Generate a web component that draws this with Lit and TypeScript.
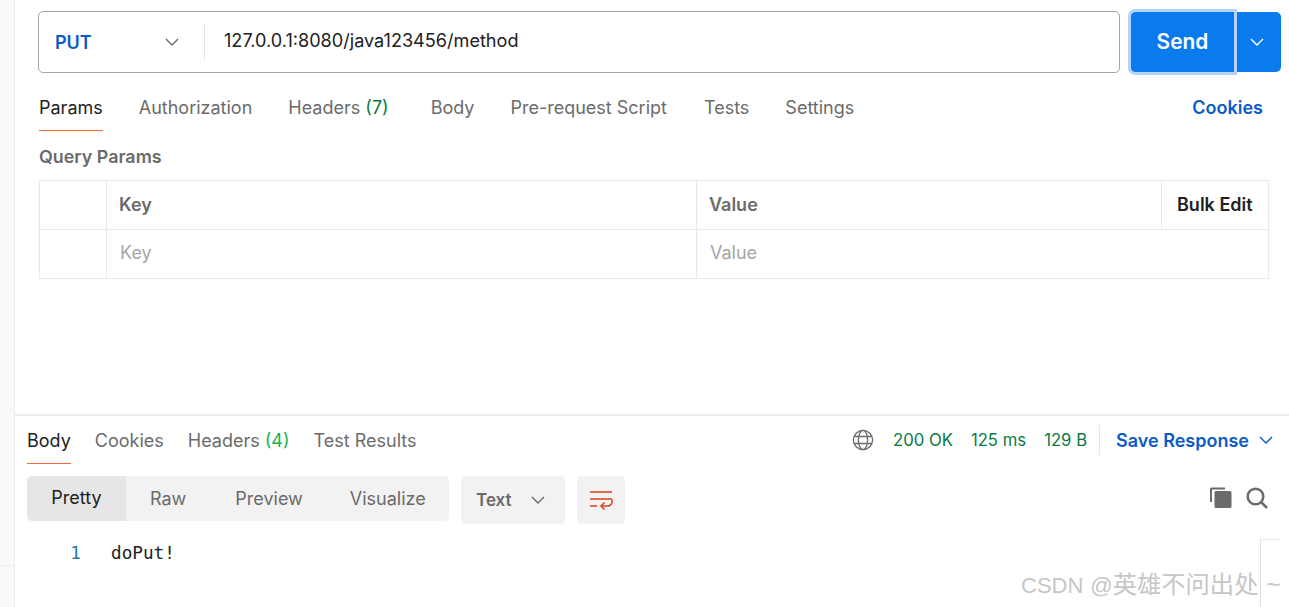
import { LitElement, html, css } from "lit";
import { customElement } from "lit/decorators.js";

const chev = () => html`<svg viewBox="0 0 14 8" width="14" height="8" fill="none" stroke="currentColor" stroke-width="1.4"><path d="M1 1l6 6 6-6"/></svg>`;

@customElement("app-root")
export class AppRoot extends LitElement {
  static styles = css`
    :host { display: flex; width: 1289px; height: 607px; overflow: hidden; background: #fff; position: relative; font-family: Inter, "Liberation Sans", sans-serif; font-size: 18px; color: #212121; }
    .rail { width: 14px; flex: none; background: #f9f9f9; border-right: 1px solid #ededed; display: flex; flex-direction: column; }
    .rail i { display: block; height: 1px; background: #ededed; margin-top: 565px; }
    .main { flex: 1; display: flex; flex-direction: column; min-width: 0; }
    .req { flex: none; height: 416px; padding: 11px 8px 0 23px; box-sizing: border-box; border-bottom: 2px solid #ededed; }
    .bar { display: flex; height: 62px; }
    .url { flex: none; width: 1082px; box-sizing: border-box; border: 1px solid #a6a6a6; border-radius: 5px; display: flex; align-items: center; }
    .method { width: 166px; box-sizing: border-box; padding: 0 25px 0 16px; display: flex; align-items: center; justify-content: space-between; color: #0b5bc4; font-weight: 600; font-size: 18px; height: 36px; border-right: 1px solid #e6e6e6; }
    .method svg { color: #6b6b6b; }
    .addr { padding-left: 19px; font-size: 18.1px; position: relative; top: -2px; }
    .send { margin-left: 11px; width: 103px; height: 60px; margin-top: 1px; padding-bottom: 2px; box-sizing: border-box; background: #097bed; color: #fff; font-weight: 600; font-size: 20.9px; display: flex; align-items: center; justify-content: center; border-radius: 4px 0 0 4px; outline: 3px solid #b5d4f8; }
    .more { margin-left: 3px; width: 44px; height: 60px; margin-top: 1px; padding-right: 4px; box-sizing: border-box; background: #097bed; color: #fff; border-radius: 0 5px 5px 0; display: flex; align-items: center; justify-content: center; }
    .tabs { display: flex; align-items: flex-start; gap: 36px; }
    .rtabs { margin-top: 24px; height: 36px; padding-left: 1px; }
    .tab { color: #6b6b6b; white-space: nowrap; line-height: 22px; }
    .tab.on { color: #212121; position: relative; }
    .tab.on::after { content: ""; position: absolute; left: 0; right: 0; top: 33px; height: 1px; background: #f26b3a; }
    .body-tab { margin-left: 6px; }
    .tests-tab { margin-left: 1px; }
    .n7 { color: #0a7a43; }
    .n4 { color: #18b254; }
    .spacer { flex: 1; }
    .cookies { color: #0b5bc4; font-weight: 600; padding-right: 18px; }
    .qp { font-weight: 600; color: #6b6b6b; font-size: 17.9px; margin-top: 13px; line-height: 22px; padding-left: 1px; }
    .grid { margin-top: 12px; margin-left: 1px; width: 1230px; box-sizing: border-box; border: 1px solid #e9e9e9; border-width: 1px 1px 0 1px; display: grid; grid-template-columns: 67px 590px 465px 1fr; font-size: 18px; }
    .grid > div { height: 49px; box-sizing: border-box; border-bottom: 1px solid #e9e9e9; border-right: 1px solid #e9e9e9; display: flex; align-items: center; padding-left: 12px; }
    .grid > div.last { border-right: 0; }
    .grid .h { font-weight: 600; color: #6b6b6b; padding-bottom: 1px; }
    .grid .bulk { color: #212121; font-weight: 600; padding: 0 0 1px 15px; }
    .grid .ph { color: #a6a6a6; padding: 0 0 3px 13px; }
    .grid .cell2 { grid-column: span 2; }
    .resp { flex: 1; padding: 0 0 0 12px; position: relative; }
    .rtop { display: flex; height: 50px; align-items: flex-start; }
    .rtop .tabs { gap: 24px; margin-top: 14px; }
    .meta { margin-left: auto; display: flex; align-items: center; color: #0a7a43; font-size: 16.7px; margin-top: 9px; height: 30px; padding-right: 16px; }
    .meta .globe { margin-right: 19px; color: #6b6b6b; }
    .meta .s { margin-right: 18px; white-space: nowrap; }
    .meta .sep { width: 1px; height: 30px; background: #e6e6e6; margin: 0 16px 0 -6px; }
    .meta .save { color: #0b5bc4; font-weight: 600; font-size: 18px; margin-right: 10px; white-space: nowrap; }
    .meta svg:last-child { color: #0b5bc4; }
    .tools { display: flex; align-items: flex-start; margin-top: 10px; height: 48px; }
    .seg { display: flex; flex: none; width: 422px; height: 45px; background: #f2f2f2; border-radius: 5px; overflow: hidden; color: #6b6b6b; align-items: center; }
    .seg span { line-height: 43px; flex: none; }
    .seg .on { width: 99px; background: #e6e6e6; color: #212121; text-align: center; margin-right: 24px; line-height: 45px; padding-bottom: 1px; height: 45px; box-sizing: border-box; line-height: 43px; }
    .seg .g { margin-right: 49px; }
    .seg .g:nth-child(3) { margin-right: 47px; }
    .fmt { margin-left: 12px; width: 104px; height: 48px; box-sizing: border-box; padding: 0 20px 0 15px; background: #f2f2f2; border-radius: 5px; display: flex; align-items: center; justify-content: space-between; color: #6b6b6b; font-weight: 600; font-size: 17px; }
    .wrap { margin-left: 12px; width: 48px; height: 48px; background: #f2f2f2; border-radius: 5px; display: flex; align-items: center; justify-content: center; }
    .icons { margin-left: auto; display: flex; gap: 14px; align-items: center; height: 44px; padding-right: 21px; color: #6b6b6b; }
    .code { display: flex; margin-top: 18px; font-family: "DejaVu Sans Mono", "Liberation Mono", monospace; font-size: 17.7px; line-height: 22px; }
    .ln { width: 54px; text-align: right; color: #1a78ab; flex: none; }
    .tx { margin-left: 30px; color: #222; }
    .sb { position: absolute; right: 8px; bottom: 0; width: 21px; height: 68px; border-left: 1px solid #e0e0e0; border-top: 1px solid #e8e8e8; box-sizing: border-box; }
    .wm { position: absolute; left: 1021px; top: 570px; font-size: 22px; line-height: 30px; color: #c6c6c6; white-space: nowrap; font-family: "Liberation Sans", "Noto Sans CJK SC", sans-serif; display: flex; align-items: baseline; }
    .wm .at { margin-left: 7px; }
    .wm .cn { font-size: 24.3px; }
    .wm .til { font-size: 24px; margin-left: 8px; }
  `;

  render() {
    return html`
      <div class="rail"><i></i></div>
      <div class="main">
        <section class="req">
          <div class="bar">
            <div class="url">
              <div class="method"><span>PUT</span>${chev()}</div>
              <div class="addr">127.0.0.1:8080/java123456/method</div>
            </div>
            <div class="send">Send</div>
            <div class="more">${chev()}</div>
          </div>
          <div class="tabs rtabs">
            <span class="tab on">Params</span>
            <span class="tab">Authorization</span>
            <span class="tab">Headers <span class="n7">(7)</span></span>
            <span class="tab body-tab">Body</span>
            <span class="tab">Pre-request Script</span>
            <span class="tab tests-tab">Tests</span>
            <span class="tab">Settings</span>
            <span class="spacer"></span>
            <span class="cookies">Cookies</span>
          </div>
          <div class="qp">Query Params</div>
          <div class="grid">
            <div></div><div class="h">Key</div><div class="h">Value</div><div class="bulk last">Bulk Edit</div>
            <div></div><div class="ph">Key</div><div class="ph cell2 last">Value</div>
          </div>
        </section>
        <section class="resp">
          <div class="rtop">
            <div class="tabs">
              <span class="tab on">Body</span>
              <span class="tab">Cookies</span>
              <span class="tab">Headers <span class="n4">(4)</span></span>
              <span class="tab">Test Results</span>
            </div>
            <div class="meta">
              <svg class="globe" viewBox="0 0 22 22" width="22" height="22" fill="none" stroke="currentColor" stroke-width="1.3">
                <circle cx="11" cy="11" r="9.6"/><ellipse cx="11" cy="11" rx="4.6" ry="9.6"/><path d="M2 7.5h18M2 14.5h18"/>
              </svg>
              <span class="s">200 OK</span>
              <span class="s">125 ms</span>
              <span class="s">129 B</span>
              <span class="sep"></span>
              <span class="save">Save Response</span>
              ${chev()}
            </div>
          </div>
          <div class="tools">
            <div class="seg">
              <span class="on">Pretty</span>
              <span class="g">Raw</span>
              <span class="g">Preview</span>
              <span class="g">Visualize</span>
            </div>
            <div class="fmt"><span>Text</span>${chev()}</div>
            <div class="wrap">
              <svg viewBox="0 0 24 20" width="24" height="20" fill="none" stroke="#d9421b" stroke-width="1.5">
                <path d="M1 2h22M1 9h21M1 16h7"/>
                <path d="M22 9c2 0 1.500 7-3 7h-7"/>
                <path d="M15.500 12.500L12 16l3.500 3.500"/>
              </svg>
            </div>
            <div class="icons">
              <svg viewBox="0 0 22 22" width="22" height="22" fill="currentColor">
                <rect x="4.500" y="4" width="17" height="17" rx="1.500"/>
                <path d="M0 15V2A1.500 1.500 0 0 1 1.500 0.500H15v2H2V15z"/>
              </svg>
              <svg viewBox="0 0 22 22" width="22" height="22" fill="none" stroke="currentColor" stroke-width="2.500">
                <circle cx="9.500" cy="9.500" r="7.800"/><path d="M15 15l6 6"/>
              </svg>
            </div>
          </div>
          <div class="code"><span class="ln">1</span><span class="tx">doPut!</span></div>
          <div class="sb"></div>
        </section>
      </div>
      <div class="wm"><span>CSDN</span><span class="at">@</span><span class="cn">英雄不问出处</span><span class="til">~</span></div>
    `;
  }
}
